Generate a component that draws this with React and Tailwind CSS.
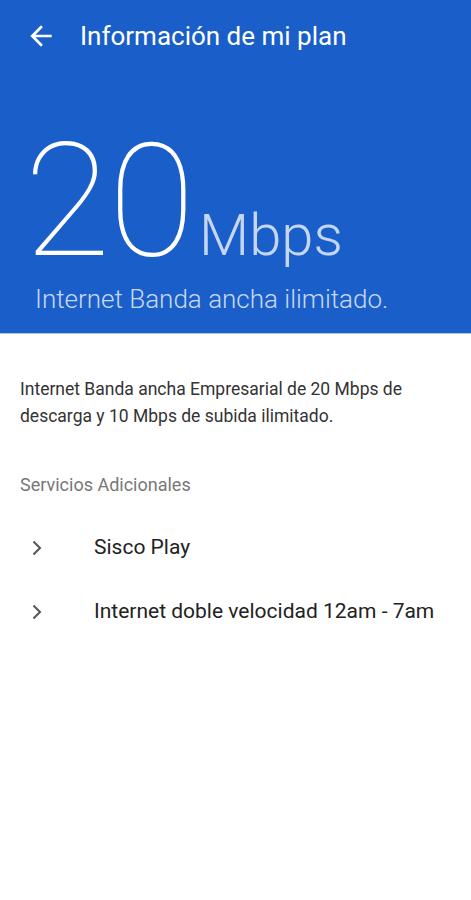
import React from "react";

const Chevron = () => (
  <svg width="24" height="24" viewBox="0 0 24 24" className="text-[#555]">
    <path d="M8.5 5.5 L15 12 L8.5 18.5" fill="none" stroke="currentColor" strokeWidth="2" />
  </svg>
);

export default function App() {
  return (
    <div className="w-[471px] h-[900px] bg-white font-['Roboto',sans-serif] overflow-hidden">
      <div className="bg-[#1a5fc9] h-[334px] flex flex-col border-b border-[#a9c3ef]">
        <div className="h-[72px] flex items-center pl-[25px]">
          <svg width="32" height="32" viewBox="0 0 24 24" className="text-white">
            <path d="M20 11H7.83l5.59-5.59L12 4l-8 8 8 8 1.41-1.41L7.83 13H20v-2z" fill="currentColor" />
          </svg>
          <span className="ml-[23px] text-white text-[26px] leading-none">Información de mi plan</span>
        </div>
        <div className="flex items-baseline pl-[24px] mt-[54px] h-[150px]">
          <span className="text-white text-[158px] font-thin leading-[150px] tracking-[-2px]">20</span>
          <span className="text-[#c5d6f2] text-[58px] font-light leading-none ml-[6px]">Mbps</span>
        </div>
        <div className="pl-[35px] mt-[10px] text-[#c9d8f2] text-[26px] font-light leading-none">
          Internet Banda ancha ilimitado.
        </div>
      </div>
      <div className="px-[20px] pt-[42px]">
        <p className="text-[#333] text-[17.5px] leading-[27px]">
          Internet Banda ancha Empresarial de 20 Mbps de descarga y 10 Mbps de subida ilimitado.
        </p>
        <div className="mt-[46px] text-[#777] text-[18px] leading-none">Servicios Adicionales</div>
        <div className="mt-[42px] flex flex-col gap-[39.5px]">
          {["Sisco Play", "Internet doble velocidad 12am - 7am"].map((t) => (
            <div key={t} className="flex items-center h-[24px]">
              <div className="w-[24px] ml-[5px]"><Chevron /></div>
              <span className="ml-[45px] text-[#222] text-[21px]">{t}</span>
            </div>
          ))}
        </div>
      </div>
    </div>
  );
}
